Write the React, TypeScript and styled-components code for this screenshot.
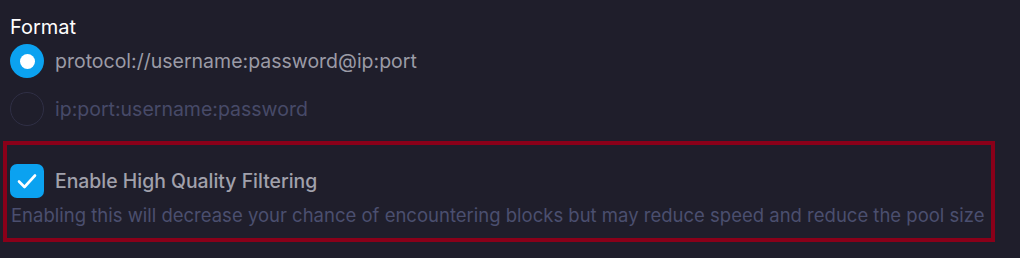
import React, { useState } from "react";
import styled, { createGlobalStyle } from "styled-components";

const GlobalStyle = createGlobalStyle`
  html, body {
    margin: 0;
    padding: 0;
    background: #ffffff;
  }
  * {
    box-sizing: border-box;
  }
`;

const Page = styled.div`
  height: 258px;
  background: #1f1e2b;
  padding: 15px 0 0 3px;
  font-family: Inter, "Noto Sans", sans-serif;
  display: flex;
  flex-direction: column;
`;

const FormatGroup = styled.div`
  display: flex;
  flex-direction: column;
  padding-left: 7px;
`;

const GroupLabel = styled.div`
  color: #ffffff;
  font-size: 20px;
  line-height: 24px;
`;

const OptionList = styled.div`
  display: flex;
  flex-direction: column;
  gap: 14px;
  margin-top: 5px;
`;

const OptionRow = styled.label`
  display: flex;
  align-items: center;
  gap: 11px;
  cursor: pointer;
`;

const RadioCircle = styled.span<{ $checked: boolean }>`
  width: 34px;
  height: 34px;
  border-radius: 50%;
  flex-shrink: 0;
  display: flex;
  align-items: center;
  justify-content: center;
  background: ${(p) => (p.$checked ? "#0ba2f0" : "transparent")};
  border: ${(p) => (p.$checked ? "none" : "1px solid #2f2f45")};
`;

const RadioDot = styled.span`
  width: 15px;
  height: 15px;
  border-radius: 50%;
  background: #ffffff;
`;

const OptionText = styled.span<{ $checked: boolean }>`
  font-size: 19.5px;
  color: ${(p) => (p.$checked ? "#9b9ba6" : "#474a68")};
`;

const FilterBox = styled.section`
  width: 992px;
  margin-top: 15px;
  border: 4px solid #8a0019;
  padding: 19px 0 12px 3px;
  display: flex;
  flex-direction: column;
  gap: 6px;
`;

const CheckRow = styled.label`
  display: flex;
  align-items: center;
  gap: 11px;
  cursor: pointer;
`;

const CheckBox = styled.span`
  width: 34px;
  height: 34px;
  border-radius: 7px;
  background: #0ba2f0;
  display: flex;
  align-items: center;
  justify-content: center;
  flex-shrink: 0;
`;

const CheckTitle = styled.span`
  font-size: 19.4px;
  font-weight: 500;
  color: #a1a1ac;
`;

const Description = styled.p`
  margin: 0;
  padding-left: 1px;
  font-size: 18.5px;
  line-height: 22px;
  color: #4b4f6f;
  white-space: nowrap;
`;

const formats = [
  "protocol://username:password@ip:port",
  "ip:port:username:password",
];

export default function App() {
  const [selected, setSelected] = useState(0);
  return (
    <>
      <GlobalStyle />
      <Page>
        <FormatGroup>
          <GroupLabel>Format</GroupLabel>
          <OptionList>
            {formats.map((f, i) => (
              <OptionRow key={f} onClick={() => setSelected(i)}>
                <RadioCircle $checked={selected === i}>
                  {selected === i && <RadioDot />}
                </RadioCircle>
                <OptionText $checked={selected === i}>{f}</OptionText>
              </OptionRow>
            ))}
          </OptionList>
        </FormatGroup>
        <FilterBox>
          <CheckRow>
            <CheckBox>
              <svg width="24" height="24" viewBox="0 0 24 24" fill="none" stroke="#ffffff" strokeWidth="2.6" strokeLinecap="round" strokeLinejoin="round">
                <polyline points="4 12.5 9.5 18 20 6.5" />
              </svg>
            </CheckBox>
            <CheckTitle>Enable High Quality Filtering</CheckTitle>
          </CheckRow>
          <Description>
            Enabling this will decrease your chance of encountering blocks but may reduce speed and reduce the pool size
          </Description>
        </FilterBox>
      </Page>
    </>
  );
}
